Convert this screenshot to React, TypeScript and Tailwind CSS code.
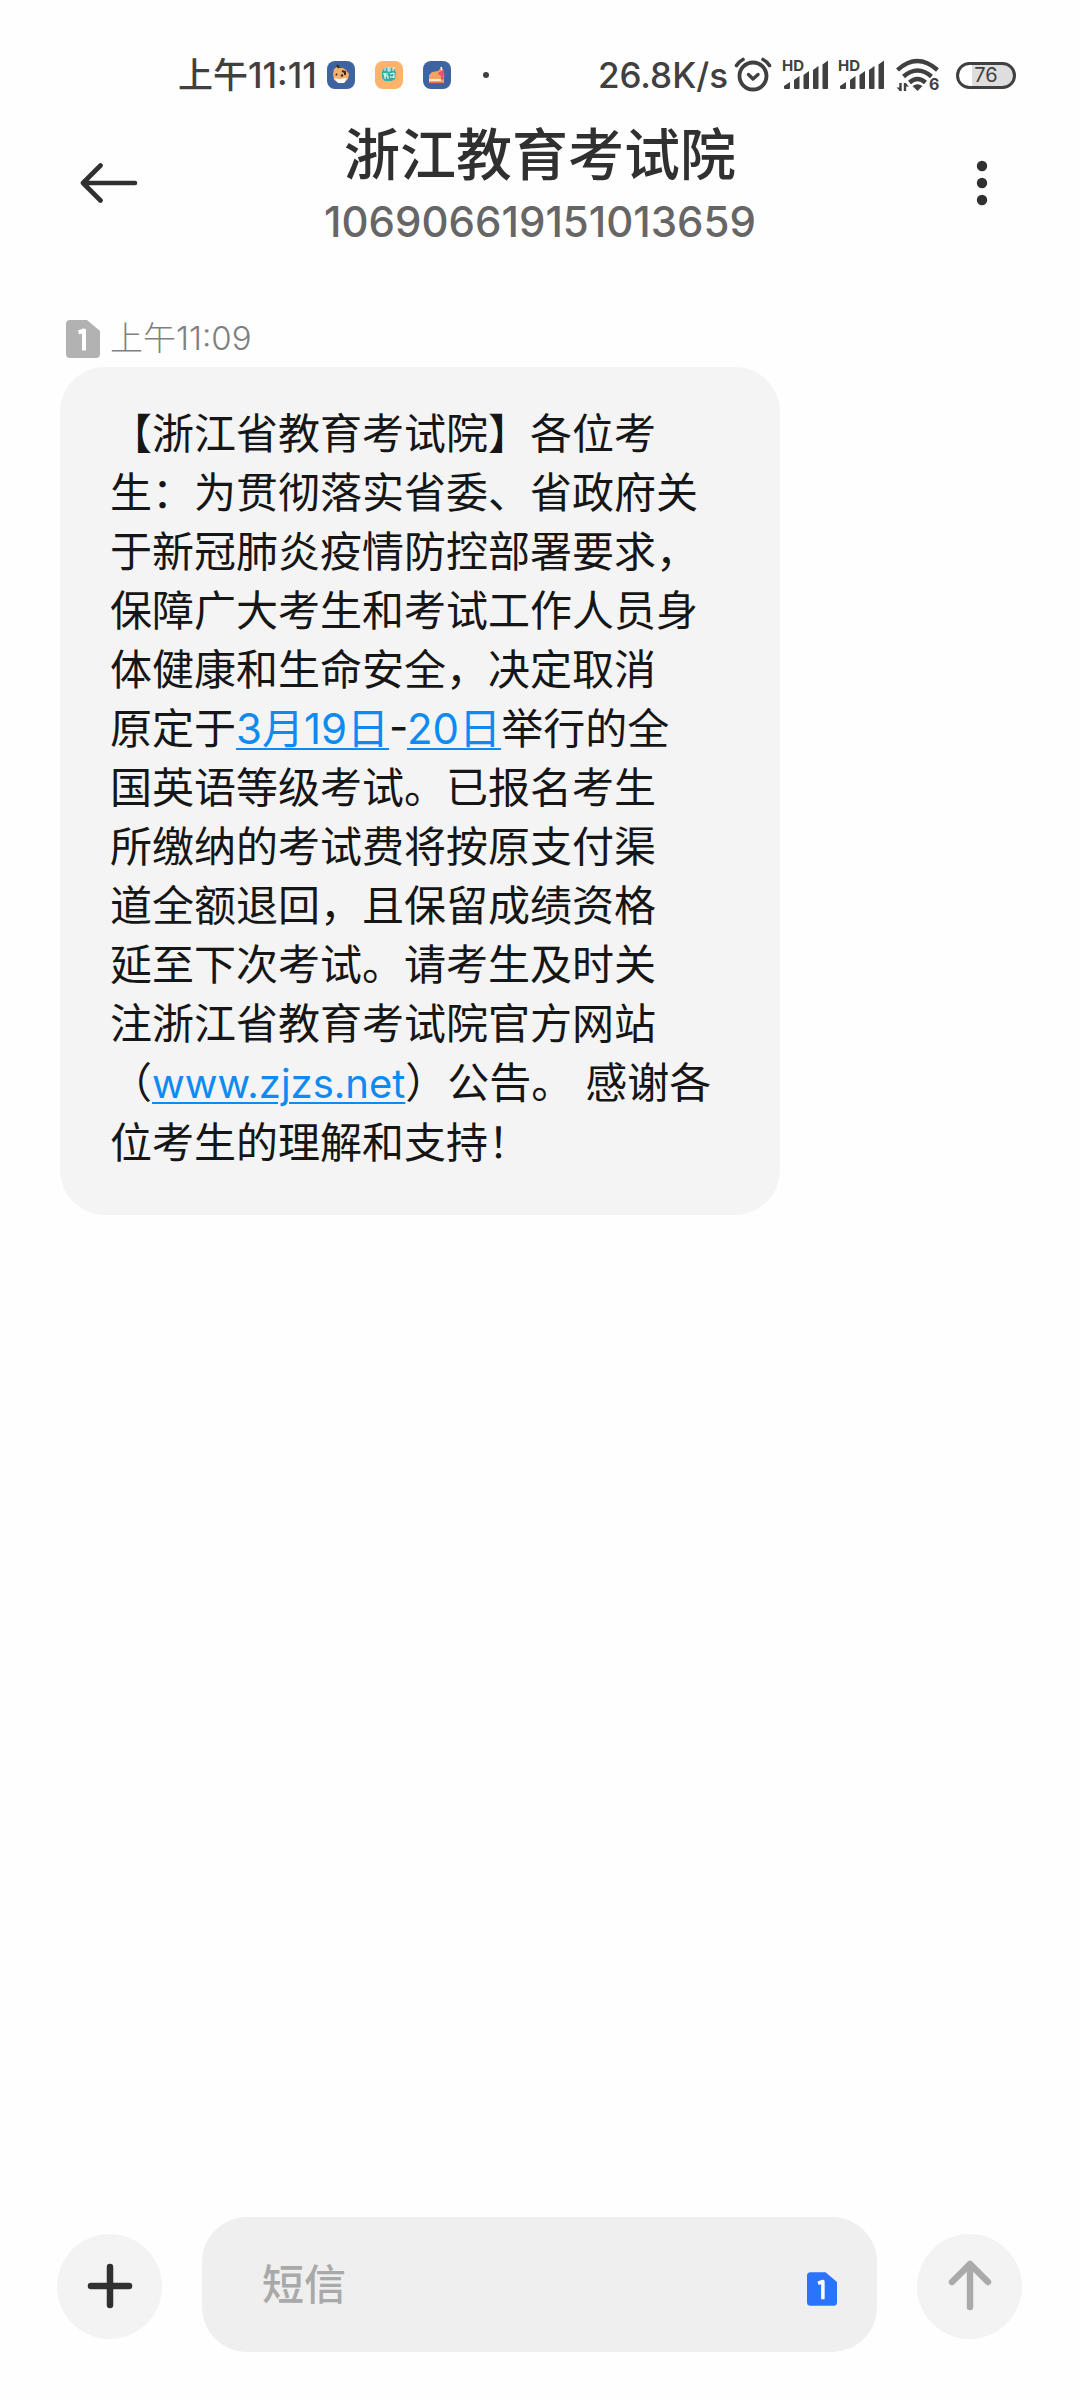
import React, { useState } from 'react';

const FONT = "font-['Inter','Noto_Sans_CJK_SC',sans-serif]";

const BearIcon = () => (
  <svg width="28" height="28" viewBox="0 0 28 28">
    <rect width="28" height="28" rx="8" fill="#3f63a0" />
    <path d="M7 8l3-2 2 1 4 0 3 2 3 4-1 5-4 4-5 0-5-3-1-6z" fill="#f3ae70" />
    <path d="M7 17l5 1 8-1-3 5-6 0z" fill="#fff" />
    <path d="M10 4l2 3M15 10l3 1 0 3M14 15l2-1M9 13l1 1" stroke="#3b2620" strokeWidth="2" fill="none" />
  </svg>
);

const LiveIcon = () => (
  <svg width="28" height="28" viewBox="0 0 28 28">
    <rect width="28" height="28" rx="8" fill="#ffb26b" />
    <path d="M9 7h10l2 5-1 6-3 2h-7l-3-3v-6z" fill="#35aea6" />
    <path d="M10 7v3M13 7h2v3h-2zM20 7h-2v3M8 13h5M10 12v6M9 15h4v3M15 13l4-1v5M15 16h4" stroke="#fff" strokeWidth="1" fill="none" />
  </svg>
);

const CakeIcon = () => (
  <svg width="28" height="28" viewBox="0 0 28 28">
    <rect width="28" height="28" rx="8" fill="#3f63a0" />
    <path d="M6 14l3-3 6-1 3-3 3 4v11H6z" fill="#f3a25f" />
    <path d="M16 11l5-2v3l1 2-2 1 1 3-3 1v-4l-3-2z" fill="#e8526a" />
    <path d="M6 19h12M18 6l1 3" stroke="#fff" strokeWidth="1.5" />
    <path d="M6 22h14" stroke="#cf4a4a" strokeWidth="1" />
  </svg>
);

const AlarmIcon = () => (
  <svg width="38" height="36" viewBox="0 0 38 36" fill="none" stroke="#404040" strokeLinecap="round" strokeLinejoin="round">
    <circle cx="19" cy="19" r="13.5" strokeWidth="3.8" />
    <path d="M14.5 17.5l4.500 4.500 5-4.500" strokeWidth="3.4" />
    <path d="M2.5 8.5Q5 4.5 9 2.5M35.5 8.5Q33 4.5 29 2.5" strokeWidth="3.6" />
  </svg>
);

const SignalIcon = () => (
  <svg width="48" height="46" viewBox="0 -7 48 46" fill="#404040">
    <text x="0" y="12" fontSize="15" fontWeight="700" fontFamily="Inter, sans-serif">HD</text>
    <path d="M2 27l6-4v6a1 1 0 0 1-1 1H3a1 1 0 0 1-1-1z" />
    <path d="M12 21l5.500-4v12a1 1 0 0 1-1 1h-3.500a1 1 0 0 1-1-1z" />
    <path d="M21.5 16l5.500-4v17a1 1 0 0 1-1 1h-3.500a1 1 0 0 1-1-1z" />
    <path d="M31 11l5.500-4v22a1 1 0 0 1-1 1h-3.500a1 1 0 0 1-1-1z" />
    <path d="M40.5 5.500l5.500-4v27.500a1 1 0 0 1-1 1h-3.500a1 1 0 0 1-1-1z" />
  </svg>
);

const WifiIcon = () => (
  <svg width="46" height="46" viewBox="0 -6 46 46" fill="none" stroke="#404040" strokeWidth="4.4">
    <path d="M1.5 12Q21 -6 41.5 12" />
    <path d="M7.5 18.5Q21.5 6.5 35.5 18.5" />
    <path d="M13.5 24.5Q21.5 17.5 29.5 24.5" />
    <path d="M16.5 28q5-3.5 10 0l-5 5z" fill="#404040" stroke="none" />
    <path d="M4.5 25v8M9 33v-8" strokeWidth="2.4" />
    <path d="M.5 29.5h4v4zM13 28.5H9v-4z" fill="#404040" stroke="none" />
    <text x="33" y="32" fontSize="16" fontWeight="700" fontFamily="Inter, sans-serif" fill="#404040" stroke="none">6</text>
  </svg>
);

const Sim: React.FC<{ className: string }> = ({ className }) => (
  <svg viewBox="0 0 34 38" className={className}>
    <path d="M4 0h17l13 11v23a4 4 0 0 1-4 4H4a4 4 0 0 1-4-4V4a4 4 0 0 1 4-4z" fill="currentColor" />
    <path d="M12.5 12.5l5.500-2v20" fill="none" stroke="#fff" strokeWidth="4" strokeLinejoin="round" />
  </svg>
);

const StatusBar = () => (
  <div className="h-[110px] pt-10 pl-[178px] pr-16 flex items-center justify-between text-[35px] leading-[70px] text-[#404040]">
    <div className="flex items-center font-medium">
      <span>上午11:11</span>
      <div className="flex items-center gap-5 ml-[10px]">
        <BearIcon />
        <LiveIcon />
        <CakeIcon />
      </div>
      <span className="w-[6px] h-[6px] rounded-full bg-[#404040] ml-8" />
    </div>
    <div className="flex items-center">
      <span className="mr-[6px] font-medium">26.8K/s</span>
      <AlarmIcon />
      <div className="flex items-center gap-2 ml-[10px] mr-[10px]">
        <SignalIcon />
        <SignalIcon />
      </div>
      <WifiIcon />
      <div className="w-[60px] h-[27px] ml-[14px] rounded-full border-[3px] border-[#404040] bg-linear-to-r from-white from-25% to-[#dedede] to-25% flex items-center justify-center text-[20px] leading-none">
        76
      </div>
    </div>
  </div>
);

const Header = () => (
  <header className="h-[146px] px-20 flex items-start justify-between">
    <button aria-label="返回" className="mt-[53px]">
      <svg width="58" height="40" viewBox="0 0 58 40" fill="none" stroke="#303030" strokeWidth="4.6" strokeLinecap="round" strokeLinejoin="round">
        <path d="M55 20H3M20.5 2.5L3 20l17.500 17.500" />
      </svg>
    </button>
    <div className="text-center">
      <h1 className="text-[56px] leading-[90px] font-medium text-[#303030]">浙江教育考试院</h1>
      <p className="text-[42px] leading-[44px] font-medium text-[#666666]">106906619151013659</p>
    </div>
    <button aria-label="更多" className="mt-12 w-[58px] flex justify-end pr-3">
      <svg width="12" height="50" viewBox="0 0 12 50" fill="#303030">
        <circle cx="6" cy="8" r="5.2" />
        <circle cx="6" cy="25" r="5.2" />
        <circle cx="6" cy="42" r="5.2" />
      </svg>
    </button>
  </header>
);

const Link: React.FC<{ href: string; children: React.ReactNode }> = ({ href, children }) => (
  <a href={href} className="text-[#0d8bf2] underline decoration-2 underline-offset-4">{children}</a>
);

const Message = () => (
  <div className="px-[60px] pt-[57px]">
    <div className="flex items-center gap-[10px] h-[54px] pb-[2px] pl-[6px] text-[33px] text-[#808080]">
      <Sim className="w-[34px] h-[38px] text-[#b2b2b2]" />
      <span className="font-light">上午11:09</span>
    </div>
    <p className="w-[720px] rounded-[45px] bg-[#f4f4f4] pl-[50px] pt-[37px] pb-[43px] text-[42px] leading-[59px] text-[#161616] whitespace-nowrap">
      【浙江省教育考试院】各位考<br />
      生：为贯彻落实省委、省政府关<br />
      于新冠肺炎疫情防控部署要求，<br />
      保障广大考生和考试工作人员身<br />
      体健康和生命安全，决定取消<br />
      原定于<Link href="#date-start">3月19日</Link>-<Link href="#date-end">20日</Link>举行的全<br />
      国英语等级考试。已报名考生<br />
      所缴纳的考试费将按原支付渠<br />
      道全额退回，且保留成绩资格<br />
      延至下次考试。请考生及时关<br />
      注浙江省教育考试院官方网站<br />
      （<span className="text-[40px]"><Link href="http://www.zjzs.net">www.zjzs.net</Link></span>）公告。 感谢各<br />
      位考生的理解和支持！
    </p>
  </div>
);

const Composer = () => {
  const [text, setText] = useState('');

  return (
    <div className="mt-auto pl-[57px] pr-[58px] pb-12 flex items-center gap-10">
      <button aria-label="添加" className="shrink-0 w-[105px] h-[105px] mt-[3px] rounded-full bg-[#f3f3f3] flex items-center justify-center">
        <svg width="46" height="46" viewBox="0 0 46 46" stroke="#303030" strokeWidth="6.5" strokeLinecap="round">
          <path d="M23 4v38M4 23h38" />
        </svg>
      </button>
      <div className="flex-1 min-w-0 h-[135px] rounded-[45px] bg-[#efefef] flex items-center pl-[60px] pr-10">
        <input
          aria-label="短信"
          placeholder="短信"
          value={text}
          onChange={(e) => setText(e.target.value)}
          className="flex-1 min-w-0 bg-transparent outline-none text-[42px] leading-[59px] font-medium text-[#161616] placeholder:text-[#a9a9a9]"
        />
        <button aria-label="SIM 1" className="mt-2 shrink-0">
          <Sim className="w-[30px] h-[34px] text-[#2b73fb]" />
        </button>
      </div>
      <button aria-label="发送" className="shrink-0 w-[105px] h-[105px] mt-[3px] rounded-full bg-[#f3f3f3] flex items-center justify-center">
        <svg width="46" height="52" viewBox="0 0 46 52" fill="none" stroke="#aaaaaa" strokeWidth="6.5" strokeLinecap="round" strokeLinejoin="round">
          <path d="M23 47V4M5 22L23 4l18 18" />
        </svg>
      </button>
    </div>
  );
};

export default function App() {
  return (
    <div className={`min-h-screen bg-[#fefefe] flex flex-col ${FONT}`}>
      <StatusBar />
      <Header />
      <Message />
      <Composer />
    </div>
  );
}
